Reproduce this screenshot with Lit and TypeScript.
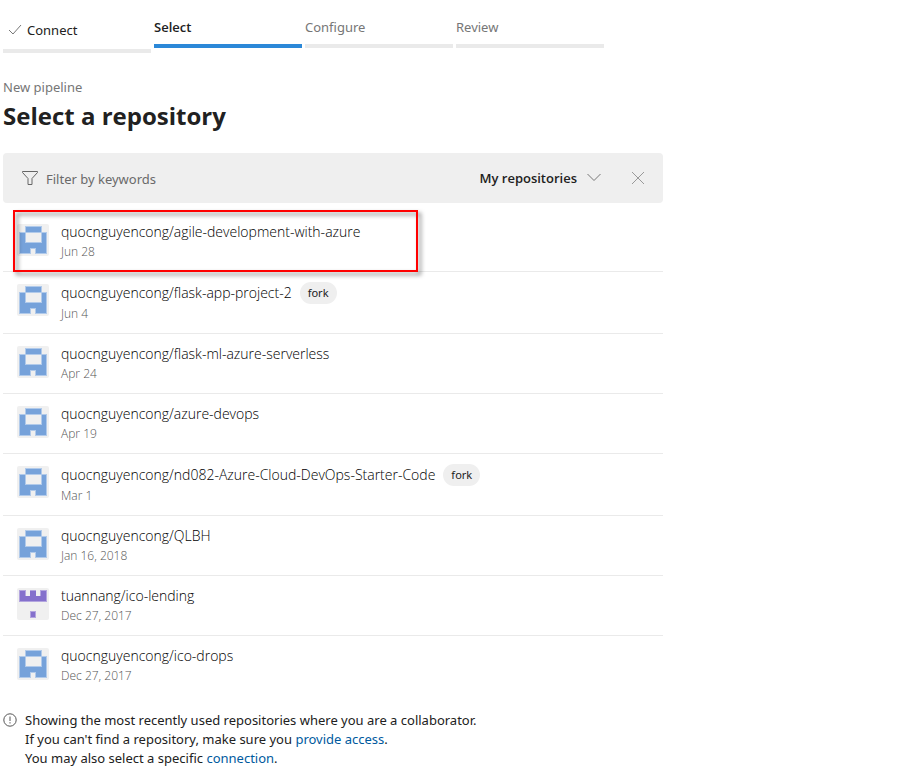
import { LitElement, html, css, svg, nothing } from "lit";
import { customElement, property, state } from "lit/decorators.js";
import { classMap } from "lit/directives/class-map.js";

interface Repo {
  name: string;
  date: string;
  fork?: boolean;
  avatar?: "house" | "crown";
  marked?: boolean;
}

const REPOS: Repo[] = [
  { name: "quocnguyencong/agile-development-with-azure", date: "Jun 28", marked: true },
  { name: "quocnguyencong/flask-app-project-2", date: "Jun 4", fork: true },
  { name: "quocnguyencong/flask-ml-azure-serverless", date: "Apr 24" },
  { name: "quocnguyencong/azure-devops", date: "Apr 19" },
  { name: "quocnguyencong/nd082-Azure-Cloud-DevOps-Starter-Code", date: "Mar 1", fork: true },
  { name: "quocnguyencong/QLBH", date: "Jan 16, 2018" },
  { name: "tuannang/ico-lending", date: "Dec 27, 2017", avatar: "crown" },
  { name: "quocnguyencong/ico-drops", date: "Dec 27, 2017" },
];

const STEPS = ["Connect", "Select", "Configure", "Review"];

@customElement("repo-avatar")
export class RepoAvatar extends LitElement {
  @property() kind: "house" | "crown" = "house";

  static styles = css`
    :host { display: block; width: 32px; height: 32px; }
    svg { display: block; }
  `;

  render() {
    const art =
      this.kind === "crown"
        ? svg`<path fill="#b3a5df" d="M2 2h7v6h4V2h6v6h4V2h7v12H2z"/>
            <path fill="#8470cc" d="M3 3h5v5h5V3h6v5h5V3h5v10H3z"/>
            <path fill="#b3a5df" d="M13 23h6v7h-6z"/><path fill="#8470cc" d="M14 24h4v5h-4z"/>`
        : svg`<path fill="#b1caea" d="M8 2h17v6h5v22H18v-5h-4v5H2V8h6z"/>
            <path fill="#76a2da" d="M9 3h15v6h5v20H19v-5h-6v5H3V9h6z"/>
            <path fill="#b1caea" d="M8 8h17v11H8z"/><path fill="#f0f0f0" d="M9 9h15v9H9z"/>`;
    return html`<svg width="32" height="32" viewBox="0 0 32 32" aria-hidden="true">
      <rect width="32" height="32" rx="2" fill="#f0f0f0" />${art}
    </svg>`;
  }
}

@customElement("app-root")
export class AppRoot extends LitElement {
  @state() private filter = "";

  static styles = css`
    :host {
      display: block;
      padding: 0 3px;
      background: #fff;
      color: #212121;
      font: 13px/20px "Noto Sans", "Open Sans", sans-serif;
    }
    * { box-sizing: border-box; }
    .steps {
      display: grid;
      grid-template-columns: repeat(4, 1fr);
      align-items: start;
      gap: 3px;
      max-width: 601px;
      margin: 0;
      padding: 17px 0 0;
      list-style: none;
    }
    .step {
      display: flex;
      align-items: center;
      gap: 5px;
      padding-bottom: 7px;
      border-bottom: 4px solid #eaeaea;
      color: #767676;
    }
    .done { padding: 3px 0 9px 5px; color: #212121; }
    .current { border-color: #2b88d8; color: #212121; font-weight: 600; }
    .eyebrow { margin: 24px 0 0; color: #767676; }
    h1 { margin: 0; font: 700 24px/38px "Open Sans", "Noto Sans", sans-serif; }
    .filter {
      display: flex;
      align-items: center;
      max-width: 660px;
      height: 50px;
      margin: 18px 0 9px;
      padding: 0 18px;
      border-radius: 4px;
      background: #efefef;
    }
    .filter svg, .step svg, .note svg { display: block; flex: none; }
    input, select, button {
      border: 0;
      padding: 0;
      margin: 0;
      background: none;
      color: inherit;
      font: inherit;
    }
    input { flex: 1; min-width: 0; height: 32px; margin-left: 7px; padding-top: 2px; }
    input::placeholder { color: #6a6a6a; opacity: 1; }
    .scope { display: flex; align-items: center; gap: 10px; }
    .current, select { font-family: "Open Sans", "Noto Sans", sans-serif; }
    select { appearance: none; field-sizing: content; font-weight: 600; }
    button { margin-left: 30px; }
    .repos { max-width: 660px; margin: 0; padding: 0; list-style: none; }
    .repo {
      position: relative;
      display: flex;
      align-items: flex-start;
      gap: 12px;
      padding: 10px 14px 9px;
      border-bottom: 1px solid #eaeaea;
    }
    .repo:last-child { border-bottom: 0; }
    repo-avatar { flex: none; margin-top: 2px; }
    .title { display: flex; align-items: center; gap: 8px; }
    .name { font: 300 14px/20px "Open Sans", "Noto Sans", sans-serif; color: #000; }
    .tag {
      padding: 0 8px;
      border-radius: 11px;
      background: #efefef;
      font-size: 11px;
      line-height: 22px;
    }
    .date { font: 300 12px/20px "Open Sans", "Noto Sans", sans-serif; color: #555; }
    .marker {
      position: absolute;
      top: -2px;
      left: 10px;
      width: 405px;
      max-width: 100%;
      bottom: -1px;
      border: 2px solid #f00;
      filter: drop-shadow(3px 3px 2px rgba(0, 0, 0, 0.5));
      pointer-events: none;
    }
    .note { display: flex; gap: 8px; margin-top: 16px; line-height: 19px; }
    .note svg { margin-top: 2px; }
    .note p { margin: 0; }
    a { color: #005a9e; text-decoration: none; }
  `;

  private renderStep(label: string, i: number) {
    return html`<li class=${classMap({ step: true, done: i === 0, current: i === 1 })}>
      ${i === 0
        ? html`<svg width="14" height="14" viewBox="0 0 14 14" fill="none" stroke="#777" aria-hidden="true">
            <path d="M1 7l4 4L13 2" />
          </svg>`
        : nothing}<span>${label}</span>
    </li>`;
  }

  private renderRepo(repo: Repo) {
    return html`<li class="repo">
      <repo-avatar kind=${repo.avatar ?? "house"}></repo-avatar>
      <div>
        <div class="title">
          <span class="name">${repo.name}</span>${repo.fork ? html`<span class="tag">fork</span>` : nothing}
        </div>
        <div class="date">${repo.date}</div>
      </div>
      ${repo.marked ? html`<div class="marker"></div>` : nothing}
    </li>`;
  }

  render() {
    const shown = REPOS.filter((r) => r.name.toLowerCase().includes(this.filter.toLowerCase()));
    return html`
      <ol class="steps">${STEPS.map((s, i) => this.renderStep(s, i))}</ol>
      <p class="eyebrow">New pipeline</p>
      <h1>Select a repository</h1>
      <div class="filter">
        <svg width="18" height="18" viewBox="0 0 18 18" fill="none" stroke="#666" aria-hidden="true">
          <path d="M1.500 2.500h15v1L11 9.500V15.500H7V9.500L1.500 3.500z" />
        </svg>
        <input
          type="text"
          aria-label="Filter by keywords"
          placeholder="Filter by keywords"
          .value=${this.filter}
          @input=${(e: Event) => (this.filter = (e.target as HTMLInputElement).value)}
        />
        <label class="scope">
          <select aria-label="Repository scope">
            <option>My repositories</option>
          </select>
          <svg width="14" height="14" viewBox="0 0 14 14" fill="none" stroke="#777" aria-hidden="true">
            <path d="M.5 3l6.500 6.500L13.500 3" />
          </svg>
        </label>
        <button type="button" aria-label="Clear filter" @click=${() => (this.filter = "")}>
          <svg width="14" height="14" viewBox="0 0 14 14" fill="none" stroke="#999" aria-hidden="true">
            <path d="M1 1l12 12M13 1L1 13" />
          </svg>
        </button>
      </div>
      <ul class="repos">${shown.map((r) => this.renderRepo(r))}</ul>
      <div class="note">
        <svg width="14" height="14" viewBox="0 0 14 14" fill="none" stroke="#555" aria-hidden="true">
          <circle cx="7" cy="7" r="6.200" />
          <path d="M7 3.500v4.500M7 9.200v1.300" />
        </svg>
        <p>
          Showing the most recently used repositories where you are a collaborator.<br />
          If you can't find a repository, make sure you <a href="#access">provide access</a>.<br />
          You may also select a specific <a href="#connection">connection</a>.
        </p>
      </div>
    `;
  }
}
